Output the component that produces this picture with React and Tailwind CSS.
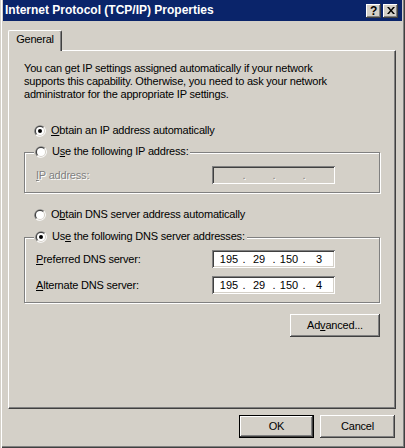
import { Fragment } from 'react'

const raised =
  'shadow-[inset_-1px_-1px_0_#404040,inset_1px_1px_0_#ffffff,inset_-2px_-2px_0_#808080,inset_2px_2px_0_#d4d0c8]'
const sunken =
  'shadow-[inset_1px_1px_0_#808080,inset_-1px_-1px_0_#ffffff,inset_2px_2px_0_#404040,inset_-2px_-2px_0_#d4d0c8]'
const grayText = 'text-[#808080] [text-shadow:1px_1px_0_#ffffff]'

function Radio({ checked }) {
  return (
    <svg width="12" height="12" viewBox="0 0 12 12" className="shrink-0">
      <path d="M10.24 1.76 A6 6 0 0 0 1.76 10.24 Z" fill="#808080" />
      <path d="M1.76 10.24 A6 6 0 0 0 10.24 1.76 Z" fill="#ffffff" />
      <path d="M9.54 2.46 A5 5 0 0 0 2.46 9.54 Z" fill="#404040" />
      <path d="M2.46 9.54 A5 5 0 0 0 9.54 2.46 Z" fill="#d4d0c8" />
      <circle cx="6" cy="6" r="4" fill="#ffffff" />
      {checked && <circle cx="6" cy="6" r="2" fill="#000000" />}
    </svg>
  )
}

// mnemonic letter underlined, like the real dialog
function Label({ pre, key_, post }) {
  return (
    <span className="whitespace-nowrap">
      {pre}
      <span className="underline underline-offset-[1px]">{key_}</span>
      {post}
    </span>
  )
}

function RadioRow({ checked, children, legend }) {
  return (
    <div
      className={`flex h-[13px] items-center gap-[5px] ${
        legend ? '-mt-[8px] ml-[9px] self-start bg-[#d4d0c8] pl-[1px] pr-[2px]' : 'pl-[10px]'
      }`}
    >
      <Radio checked={checked} />
      {children}
    </div>
  )
}

function IpField({ parts, disabled }) {
  return (
    <div
      className={`flex h-[18px] w-[123px] items-center pl-[4px] tracking-normal ${sunken} ${
        disabled ? 'bg-[#d4d0c8] ' + grayText : 'bg-white'
      }`}
    >
      {parts.map((p, i) => (
        <Fragment key={i}>
          <span className="w-[26px] text-center">{p}</span>
          {i < 3 && <span className="w-[4px] text-center">.</span>}
        </Fragment>
      ))}
    </div>
  )
}

function FieldRow({ label, parts, disabled, className = '' }) {
  return (
    <div className={`flex h-[18px] items-center pl-[11px] ${className}`}>
      <span className={`w-[176px] ${disabled ? grayText : ''}`}>{label}</span>
      <IpField parts={parts} disabled={disabled} />
    </div>
  )
}

function Button({ children, primary, className = '' }) {
  return (
    <div
      className={`flex h-[23px] w-[75px] items-center justify-center bg-[#d4d0c8] ${
        primary
          ? 'border border-black shadow-[inset_-1px_-1px_0_#404040,inset_1px_1px_0_#ffffff,inset_-2px_-2px_0_#808080]'
          : raised
      } ${className}`}
    >
      {children}
    </div>
  )
}

export default function App() {
  return (
    <div
      className="flex h-[448px] w-[405px] flex-col bg-[#d4d0c8] px-[3px] pb-[3px] text-[11px] leading-[13px] tracking-[-0.2px] text-black shadow-[inset_1px_0_0_#d4d0c8,inset_2px_0_0_#ffffff,inset_-1px_-1px_0_#404040,inset_-2px_-2px_0_#808080]"
      style={{ fontFamily: '"Liberation Sans", Arial, sans-serif' }}
    >
      {/* Title bar */}
      <div className="flex h-[21px] shrink-0 items-center bg-[#0a246a] pl-[2px] pr-[4px]">
        <span className="flex-1 whitespace-nowrap text-[12px] font-bold tracking-normal text-white">
          Internet Protocol (TCP/IP) Properties
        </span>
        <div className="flex gap-[2px]">
          <div className={`flex h-[14px] w-[15px] items-center justify-center bg-[#d4d0c8] text-[12px] font-bold leading-none ${raised}`}>
            ?
          </div>
          <div className={`flex h-[14px] w-[15px] items-center justify-center bg-[#d4d0c8] ${raised}`}>
            <svg width="8" height="7" viewBox="0 0 8 7">
              <path d="M0 0h2l2 2.5L6 0h2L5 3.5 8 7H6L4 4.5 2 7H0l3-3.5z" fill="#000" />
            </svg>
          </div>
        </div>
      </div>

      {/* Tab */}
      <div className="mt-[9px] pl-[5px]">
        <div className="relative z-10 -mb-[1px] flex h-[21px] w-[54px] justify-center rounded-t-[2px] border-l border-t border-r border-l-white border-t-white border-r-[#404040] bg-[#d4d0c8] pt-[2px] shadow-[inset_-1px_0_0_#808080]">
          General
        </div>
      </div>

      {/* Tab panel */}
      <div className="ml-[5px] mr-[6px] flex h-[359px] flex-col border border-l-white border-t-white border-r-[#404040] border-b-[#404040] px-[15px] shadow-[inset_-1px_-1px_0_#808080]">
        <p className="mt-[11px] whitespace-nowrap">
          <span className="block">You can get IP settings assigned automatically if your network</span>
          <span className="block">supports this capability. Otherwise, you need to ask your network</span>
          <span className="block">administrator for the appropriate IP settings.</span>
        </p>

        <div className="mt-[23px]">
          <RadioRow checked>
            <Label key_="O" post="btain an IP address automatically" />
          </RadioRow>
        </div>

        {/* IP group */}
        <div className="mt-[15px] flex flex-col border border-[#808080] pb-[8px] shadow-[inset_1px_1px_0_#ffffff,1px_1px_0_#ffffff]">
          <RadioRow legend>
            <Label pre="U" key_="s" post="e the following IP address:" />
          </RadioRow>
          <FieldRow
            className="mt-[8px]"
            disabled
            label={<Label key_="I" post="P address:" />}
            parts={['', '', '', '']}
          />
        </div>

        <div className="mt-[15px]">
          <RadioRow>
            <Label pre="O" key_="b" post="tain DNS server address automatically" />
          </RadioRow>
        </div>

        {/* DNS group */}
        <div className="mt-[16px] flex flex-col border border-[#808080] pb-[8px] shadow-[inset_1px_1px_0_#ffffff,1px_1px_0_#ffffff]">
          <RadioRow legend checked>
            <Label pre="Us" key_="e" post=" the following DNS server addresses:" />
          </RadioRow>
          <FieldRow
            className="mt-[7px]"
            label={<Label key_="P" post="referred DNS server:" />}
            parts={['195', '29', '150', '3']}
          />
          <FieldRow
            className="mt-[8px]"
            label={<Label key_="A" post="lternate DNS server:" />}
            parts={['195', '29', '150', '4']}
          />
        </div>

        <Button className="mt-[11px] w-[90px] self-end">
          <Label pre="Ad" key_="v" post="anced..." />
        </Button>
      </div>

      {/* Dialog buttons */}
      <div className="mt-[6px] flex justify-end gap-[6px] pr-[7px]">
        <Button primary>OK</Button>
        <Button>Cancel</Button>
      </div>
    </div>
  )
}
